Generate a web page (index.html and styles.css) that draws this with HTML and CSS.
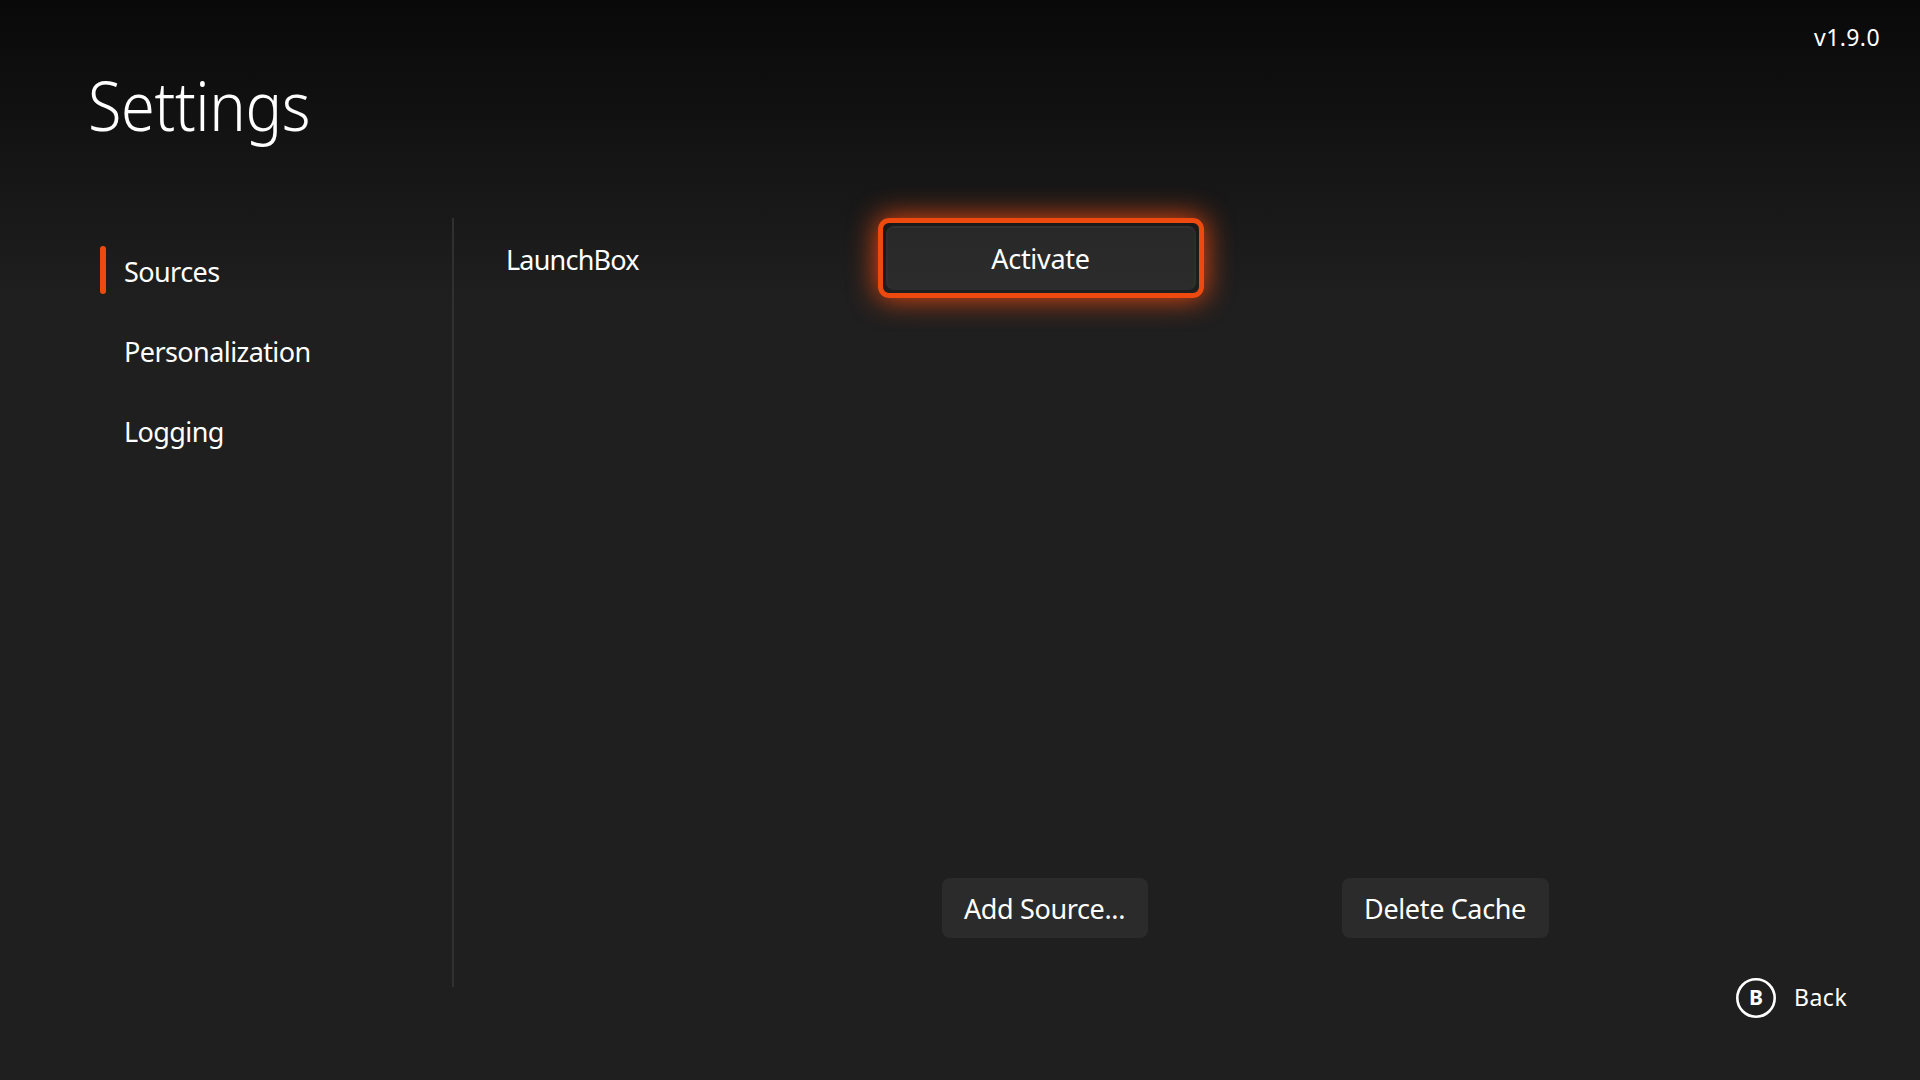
FILE: index.html
```html
<!DOCTYPE html>
<html lang="en">
<head>
<meta charset="utf-8">
<title>Settings</title>
<link rel="stylesheet" href="styles.css">
</head>
<body>
<div class="screen">
  <header class="header">
    <h1 class="title">Settings</h1>
    <span class="version">v1.9.0</span>
  </header>
  <main class="main">
    <nav class="nav">
      <a class="nav-item active">Sources</a>
      <a class="nav-item">Personalization</a>
      <a class="nav-item">Logging</a>
    </nav>
    <section class="content">
      <div class="source-row">
        <span class="source-name">LaunchBox</span>
        <div class="focus-ring"><button class="button activate">Activate</button></div>
      </div>
      <div class="actions">
        <button class="button add">Add Source...</button>
        <button class="button delete">Delete Cache</button>
      </div>
    </section>
  </main>
  <footer class="footer">
    <svg class="key" viewBox="0 0 40 40"><circle cx="20" cy="20" r="18.7" fill="none" stroke="#fff" stroke-width="2.6"/><text x="20" y="27.4" text-anchor="middle" class="key-letter">B</text></svg>
    <span class="back">Back</span>
  </footer>
</div>
</body>
</html>
```

FILE: styles.css
```css
* { box-sizing: border-box; }
body { margin: 0; background: #1f1f1f; color: #fff; font-family: "Noto Sans", "Open Sans", sans-serif; }
.screen { width: 1920px; height: 1080px; overflow: hidden; display: flex; flex-direction: column; background: linear-gradient(#090909, #1f1f1f 300px); }
.header { height: 218px; display: flex; justify-content: space-between; padding: 21px 40px 0 88px; }
.title { margin: 38px 0 0; font-size: 68px; font-weight: 300; line-height: 92px; letter-spacing: -0.4px; transform: scaleX(0.9); transform-origin: left; }
.version { font-size: 23px; line-height: 32px; letter-spacing: 0.4px; }
.main { height: 769px; display: flex; }
.nav { width: 454px; padding: 13px 0 0 99px; border-right: 2px solid #303030; }
.nav-item { display: flex; align-items: center; height: 80px; padding-left: 25px; font-size: 27px; letter-spacing: -0.58px; position: relative; }
.active::before { content: ""; position: absolute; left: 1px; top: 15px; width: 6px; height: 48px; border-radius: 3px; background: #ee4a10; }
.content { flex: 1; padding-left: 52px; display: flex; flex-direction: column; }
.source-row { display: flex; align-items: center; height: 80px; }
.source-name { width: 372px; padding-top: 2px; font-size: 27px; letter-spacing: -0.8px; }
.focus-ring { width: 326px; height: 80px; padding: 3px; border-radius: 11px; border: 5px solid #ee4a10; box-shadow: 0 0 28px 1px rgba(238, 74, 16, 0.95); }
.button { border: 0; border-radius: 8px; background: #2b2b2b; color: #fff; font: 27px "Noto Sans", sans-serif; letter-spacing: -0.36px; }
.activate { width: 100%; height: 100%; padding: 0 1px 0 0; letter-spacing: -0.28px; border: 2px solid rgba(255, 255, 255, 0.02); background: linear-gradient(#282828, #2c2c2c); }
.actions { margin-top: 580px; padding-left: 436px; display: flex; gap: 194px; }
.add { width: 206px; height: 60px; padding: 0 1px 0 0; }
.delete { width: 207px; height: 60px; padding: 0 1px 0 0; }
.footer { display: flex; align-items: center; gap: 18px; height: 40px; margin-top: -9px; padding-left: 1736px; }
.key { width: 40px; height: 40px; }
.key-letter { font: 700 21px "Noto Sans", sans-serif; fill: #fff; }
.back { margin-top: -2px; font-size: 23px; font-weight: 400; letter-spacing: 0.5px; }
```
